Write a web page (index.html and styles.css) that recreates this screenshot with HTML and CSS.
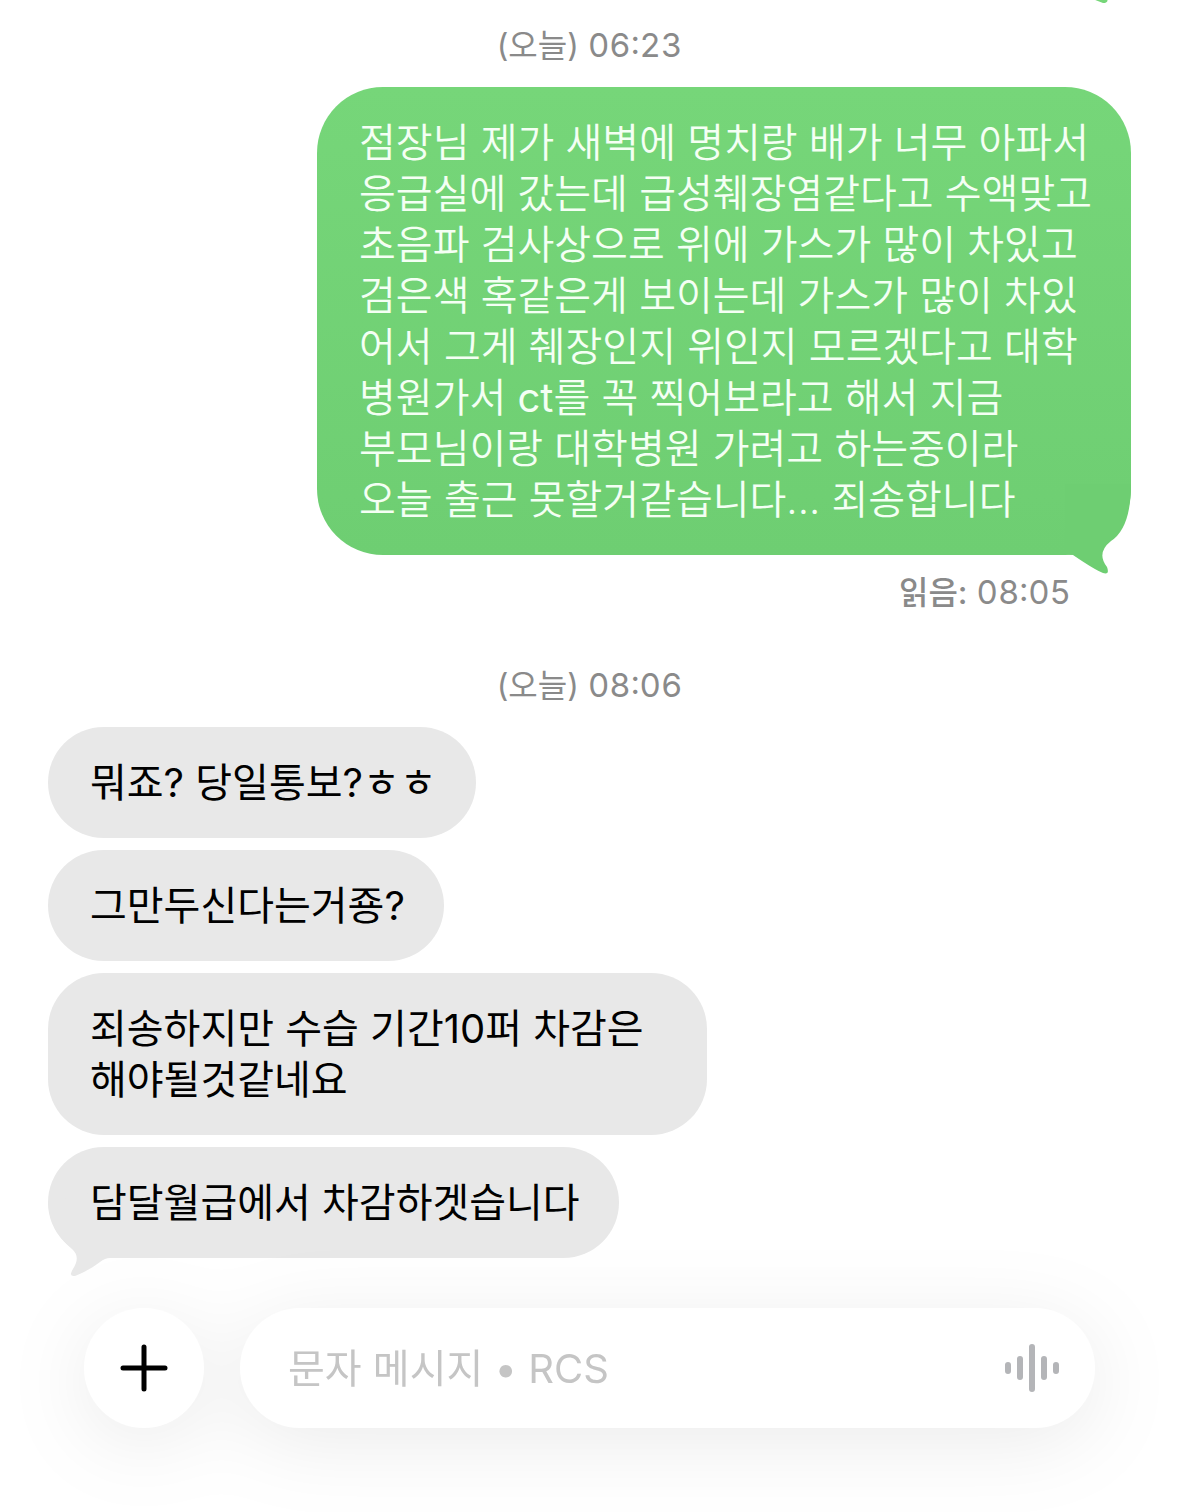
FILE: index.html
```html
<!DOCTYPE html>
<html lang="ko">
<head>
    <meta charset="UTF-8">
    <meta name="viewport" content="width=device-width, initial-scale=1.0">
    <title>메시지</title>
    <link rel="stylesheet" href="styles.css">
</head>
<body>

    <main class="chat">
        <svg class="prev-tail" viewBox="0 0 40 24" aria-hidden="true"><path d="M0 0 Q16 14 34 20 Q40 20 38 15 Q32 8 36 0 Z"/></svg>

        <p class="time">(오늘) <span class="num">06:23</span></p>

        <div class="bubble sent">
            점장님 제가 새벽에 명치랑 배가 너무 아파서<br>
            응급실에 갔는데 급성췌장염같다고 수액맞고<br>
            초음파 검사상으로 위에 가스가 많이 차있고<br>
            검은색 혹같은게 보이는데 가스가 많이 차있<br>
            어서 그게 췌장인지 위인지 모르겠다고 대학<br>
            병원가서 <span class="latin">ct</span>를 꼭 찍어보라고 해서 지금<br>
            부모님이랑 대학병원 가려고 하는중이라<br>
            오늘 출근 못할거같습니다... 죄송합니다
            <svg class="tail" viewBox="0 0 66 90" aria-hidden="true"><path d="M66 0 Q66 44 46 57 Q31 69 42 83 Q45 91 38 89 Q30 86 8 71 L0 70 L0 0 Z"/></svg>
        </div>
        <p class="read"><b>읽음:</b> <span class="num">08:05</span></p>

        <p class="time">(오늘) <span class="num">08:06</span></p>

        <div class="bubble received">뭐죠? 당일통보?ㅎㅎ</div>
        <div class="bubble received">그만두신다는거죵?</div>
        <div class="bubble received wide">죄송하지만 수습 기간10퍼 차감은<br>해야될것같네요</div>
        <div class="bubble received">
            담달월급에서 차감하겟습니다
            <svg class="tail" viewBox="0 0 66 90" aria-hidden="true"><path d="M0 15 Q2 44 24 62 Q33 70 25 82 Q20 90 27 89 Q42 83 52 75 Q57 71 62 71 L66 71 L66 0 Z"/></svg>
        </div>
    </main>

    <form class="composer">
        <button class="add" type="button" aria-label="추가">
            <svg viewBox="0 0 48 48" aria-hidden="true"><path d="M24 3V45M3 24H45"/></svg>
        </button>
        <div class="field">
            <input type="text" placeholder="문자 메시지 • RCS" aria-label="문자 메시지">
            <button class="voice" type="button" aria-label="음성 메시지">
                <svg viewBox="0 0 56 48" aria-hidden="true"><path d="M4 21V27M16 15V33M28 3V45M40 15V33M52 21V27"/></svg>
            </button>
        </div>
    </form>

</body>
</html>
```

FILE: styles.css
```css
* {
    box-sizing: border-box;
}
body {
    margin: 0;
    min-height: 100vh;
    background: #fff;
    color: #000;
    font-family: Inter, "Noto Sans CJK KR", sans-serif;
    font-size: 40px;
    line-height: 51px;
}
p {
    margin: 0;
}
.chat {
    position: relative;
    display: flex;
    flex-direction: column;
    align-items: flex-start;
    gap: 12px;
    padding: 24px 48px 50px;
}
.time,
.read {
    color: #8a8a8a;
    font-size: 32px;
    line-height: 42px;
}
.num {
    font-size: 33px;
    font-variant-numeric: tabular-nums;
    font-feature-settings: "case";
}
.time {
    align-self: center;
    margin-bottom: 8px;
}
.read {
    align-self: flex-end;
    margin: 4px 0 38px;
    padding-right: 60px;
}
.read b {
    font-weight: 500;
}
.bubble {
    position: relative;
    z-index: 0;
    padding: 30px 39px 30px 42px;
    border-radius: 56px;
}
.sent {
    align-self: flex-end;
    border-radius: 66px;
    background: linear-gradient(#76d679, #6ece72);
    color: #f4fff4;
    font-weight: 350;
}
.sent .latin {
    font-weight: 400;
}
.received {
    background: #e8e8e8;
}
.wide {
    padding-right: 63px;
}
.tail {
    position: absolute;
    z-index: -1;
    bottom: -19px;
    width: 66px;
    height: 90px;
}
.sent .tail {
    right: 0;
    fill: #6ece72;
}
.received .tail {
    left: 0;
    fill: #e8e8e8;
}
.prev-tail {
    position: absolute;
    top: -17px;
    right: 70px;
    width: 40px;
    height: 24px;
    fill: #76d679;
}
.composer {
    display: flex;
    gap: 36px;
    padding: 0 84px 84px;
    filter: drop-shadow(0 14px 40px rgba(0, 0, 0, 0.08));
}
.add,
.field {
    height: 120px;
    border: none;
    border-radius: 60px;
    background: #fff;
}
.add {
    display: grid;
    place-items: center;
    flex: none;
    width: 120px;
    padding: 0;
}
.add svg {
    width: 48px;
    height: 48px;
    stroke: #000;
    stroke-width: 5;
    stroke-linecap: round;
}
.field {
    display: flex;
    align-items: center;
    flex: 1;
    padding: 0 35px 0 46px;
}
.field input {
    flex: 1;
    min-width: 0;
    border: none;
    outline: none;
    background: none;
    font: inherit;
}
.field input::placeholder {
    color: #c5c5c5;
    opacity: 1;
}
.voice {
    padding: 0;
    border: none;
    background: none;
}
.voice svg {
    display: block;
    width: 56px;
    height: 48px;
    stroke: #b4b5b8;
    stroke-width: 6;
    stroke-linecap: round;
}
```
